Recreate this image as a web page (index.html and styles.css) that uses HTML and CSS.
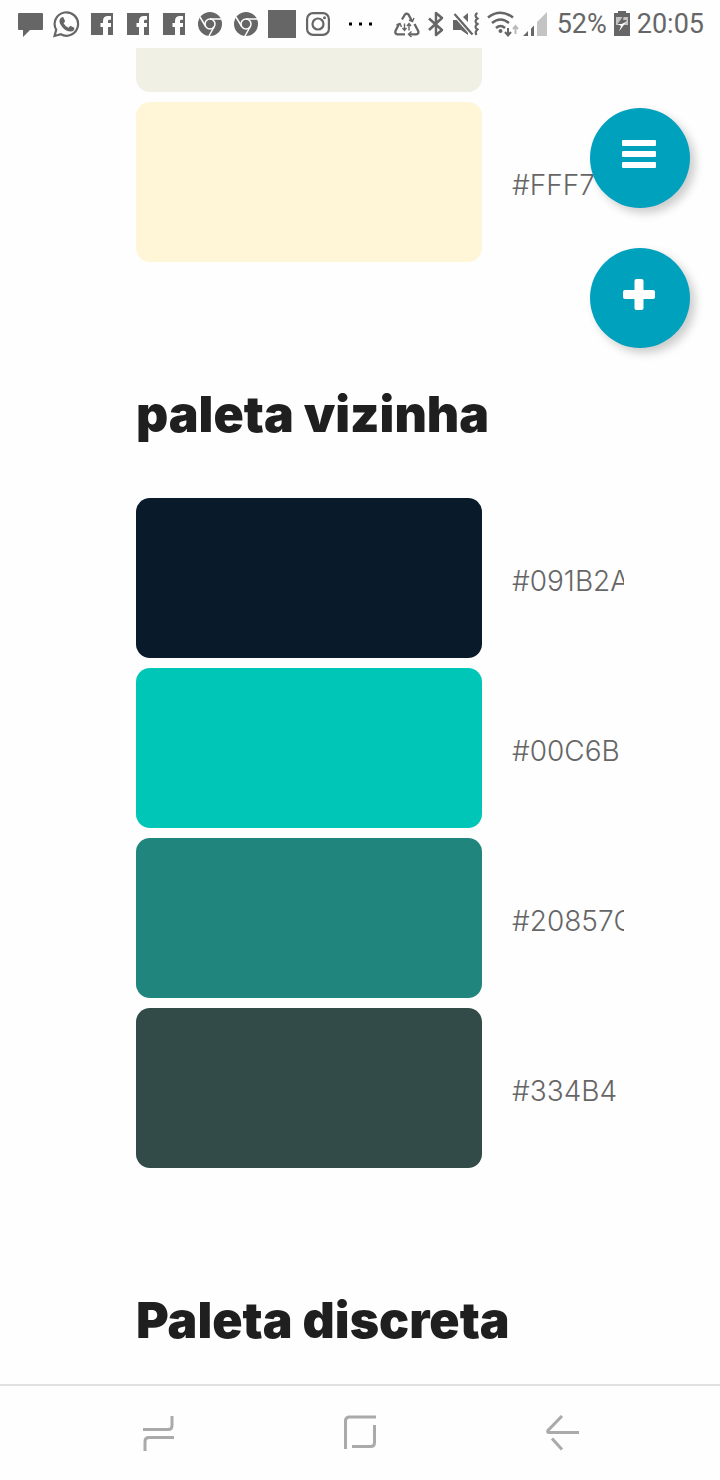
FILE: index.html
```html
<!DOCTYPE html>
<html lang="pt-BR">
<head>
<meta charset="utf-8">
<meta name="viewport" content="width=device-width, initial-scale=1">
<title>Paletas</title>
<link rel="stylesheet" href="styles.css">
</head>
<body>
<svg class="symbols" aria-hidden="true">
  <symbol id="facebook" viewBox="0 0 28 28"><path fill="#666" d="M3 3h22v22h-5v-8h3v-4h-3v-2q0-1.300 1.300-1.300H23V6h-3q-5 0-5 5v2h-2.500v4H15v8H3z"/></symbol>
  <symbol id="chrome" viewBox="0 0 28 28"><circle cx="14" cy="14" r="12" fill="#666"/><g fill="none" stroke="#fff" stroke-width="1.500"><circle cx="14" cy="14" r="5"/><path d="M14 9h11M9.700 16.500 4 7M18.300 16.500 13 26"/></g></symbol>
</svg>
<header class="status">
  <div class="notices">
    <svg class="icon" viewBox="0 0 28 28"><path fill="#666" d="M3 3h23q1 0 1 1v15q0 1-1 1H14l-7 7v-7H3q-1 0-1-1V4q0-1 1-1z"/></svg>
    <svg class="icon" viewBox="0 0 28 28"><path d="m2.500 26 1.700-6.200a11.700 11.700 0 1 1 4.600 4.500z" fill="none" stroke="#666" stroke-width="2.200"/><path fill="#666" d="M9.500 7.500q1-.8 2 0l1.500 3.500q.2.700-1.400 2.200 1.700 3.300 4.900 4.600l1.800-2.100 4 2q.5 3.500-3.700 3.900-4.600-.3-8-4.200-3.800-4.200-3-7.300.5-1.900 1.900-2.600z"/></svg>
    <svg class="icon"><use href="#facebook"/></svg>
    <svg class="icon"><use href="#facebook"/></svg>
    <svg class="icon"><use href="#facebook"/></svg>
    <svg class="icon"><use href="#chrome"/></svg>
    <svg class="icon"><use href="#chrome"/></svg>
    <span class="block"></span>
    <svg class="icon" viewBox="0 0 28 28"><g fill="none" stroke="#666" stroke-width="2.200"><rect x="3.100" y="3.100" width="21.800" height="21.800" rx="6"/><circle cx="14" cy="14" r="5.500"/></g><circle cx="20.500" cy="7.700" r="1.500" fill="#666"/></svg>
    <svg class="icon dots" viewBox="0 0 28 28"><path d="M1 12.500h3v3H1zM11 12.500h3v3h-3zM21 12.500h3v3h-3z"/></svg>
  </div>
  <div class="system">
    <svg width="26" height="28" viewBox="0 0 26 28"><g fill="none" stroke="#666" stroke-width="2.300"><path d="m8 9.500 3-5q1.700-1.800 3.400 0l3.600 6.500M5 14l-3.500 7q-.8 3 2 3.300H11M20.500 14l3.700 7q.8 3-2 3.300H15"/></g><path d="m15 10 3.500 1.500L20 8M2.500 15l3.500-1.500L7.500 17M17.500 21.500 14.500 24.300l3 2.700" fill="none" stroke="#666" stroke-width="1.400"/><path d="M10.500 13.500v7M15 20.500v-7M8.500 18l2 2.500 2-2.500M13 16l2-2.500 2 2.500" fill="none" stroke="#666" stroke-width="1.400"/></svg>
    <svg width="18" height="28" viewBox="0 0 18 28"><path d="m2 8.500 13 11.500-6 5V3l6 5L2 20" fill="none" stroke="#666" stroke-width="2.500" stroke-linejoin="round"/></svg>
    <svg class="mute" width="28" height="28" viewBox="0 0 28 28"><path fill="#666" d="M1 10h7l8 8.500V25l-7-5H1zM11 7l5-4v9z"/><path d="m2.500 4 18 20.500" stroke="#fff" stroke-width="4.500"/><path d="m2.500 4 18 20.500" stroke="#666" stroke-width="2.300"/><path d="M25.500 3q-4 2 0 5.500-4 2.500 0 5.500-4 2.500 0 5.500-3 2.500-1 5.500" fill="none" stroke="#666" stroke-width="2.200"/></svg>
    <svg class="wifi" width="32" height="28" viewBox="0 0 32 28"><g fill="none" stroke="#666" stroke-width="2.500"><path d="M1 7.500q12.500-9.500 25 0M5 13q8.500-7 17 0M9 18q4.500-4 9 0"/></g><circle cx="13.500" cy="21" r="2" fill="#666"/><path d="M21 18v7.500M18 22l3 3.500 3-3.500" fill="none" stroke="#666" stroke-width="2"/><path d="M28.500 24v-8M26 19l2.500-3 2.500 3" fill="none" stroke="#bbb" stroke-width="2"/></svg>
    <svg width="26" height="28" viewBox="0 0 26 28"><path fill="#666" d="M1 26l5-5v5zM9 26v-7.500l3-3V26z"/><path fill="#c4c4c4" d="M15 26V12l10-10v24z"/></svg>
    <span class="percent">52%</span>
    <svg class="battery" width="16" height="28" viewBox="0 0 16 28"><path fill="#666" d="M4 1h8v2h4v23H0V3h4z"/><path fill="#c4c4c4" d="M2 7h12v8H2z"/><path fill="#666" d="M10 5 3.500 14H8l-1 3 6-7H9z"/><path fill="#fff" d="M4 14h3.500L12 12 5 21.500 7 16z"/></svg>
    <time>20:05</time>
  </div>
</header>

<main class="page">
  <div class="content">
    <ul class="palette scrolled">
      <li class="row"><span class="swatch sand"></span></li>
      <li class="row"><span class="swatch cream"></span><span class="code">#FFF7</span></li>
    </ul>
    <h2 class="title">paleta vizinha</h2>
    <ul class="palette">
      <li class="row"><span class="swatch navy"></span><span class="code">#091B2A</span></li>
      <li class="row"><span class="swatch turquoise"></span><span class="code">#00C6B</span></li>
      <li class="row"><span class="swatch teal"></span><span class="code">#20857C</span></li>
      <li class="row"><span class="swatch slate"></span><span class="code">#334B4</span></li>
    </ul>
    <h2 class="title">Paleta discreta</h2>
  </div>
  <div class="actions">
    <button class="fab" type="button" aria-label="Menu"><svg width="34" height="28" viewBox="0 0 34 28" fill="#fff"><rect width="34" height="6" rx="1"/><rect y="11" width="34" height="6" rx="1"/><rect y="22" width="34" height="6" rx="1"/></svg></button>
    <button class="fab" type="button" aria-label="Adicionar"><svg width="34" height="32" viewBox="0 0 34 32" fill="#fff"><rect x="1" y="12" width="32" height="9" rx="2"/><rect x="12.500" y="1" width="9" height="31" rx="2"/></svg></button>
  </div>
</main>

<nav class="navbar" aria-label="Sistema">
  <button class="key" type="button" aria-label="Recentes"><svg width="36" height="36" viewBox="0 0 36 36"><path d="M2 14.500h25q4 0 4-4V1M33 22.500H8q-4 0-4 4V36" /></svg></button>
  <button class="key" type="button" aria-label="Início"><svg width="36" height="36" viewBox="0 0 36 36"><path d="M3.500 34V6q0-4 4-4H34M32.500 10v17.500q0 4-4 4H10"/></svg></button>
  <button class="key" type="button" aria-label="Voltar"><svg width="36" height="36" viewBox="0 0 36 36"><path d="M19 1 5 15.500q-1 2 1 2h30M9 23.500l10 11"/></svg></button>
</nav>
</body>
</html>
```
FILE: styles.css
```css
* { box-sizing: border-box; }

body {
  margin: 0;
  height: 100vh;
  display: flex;
  flex-direction: column;
  background: #fefefe;
  font-family: Inter, "Open Sans", sans-serif;
}

button {
  border: 0;
  padding: 0;
  background: none;
  cursor: pointer;
}

svg { display: block; flex: none; }

.symbols { position: absolute; width: 0; height: 0; }

.status {
  flex: none;
  height: 48px;
  padding: 0 16px;
  display: flex;
  align-items: center;
  justify-content: space-between;
  color: #666;
  font: 27px/48px Roboto, sans-serif;
}

.notices, .system { display: flex; align-items: center; }
.notices { gap: 8px; }
.system { gap: 7px; }
.icon, .block { width: 28px; height: 28px; }
.block { background: #666; }
.dots { margin-left: 8px; }
.percent { margin-left: 2px; }
.wifi { margin-right: -4px; }

.page {
  position: relative;
  flex: 1;
  min-height: 0;
  overflow: hidden;
}

.content {
  margin-right: 96px;
  padding-left: 136px;
  overflow: hidden;
}

.palette {
  margin: 0;
  padding: 0;
  list-style: none;
  display: grid;
  gap: 10px;
}

/* The first palette is partly scrolled past the top edge. */
.scrolled { margin-top: -116px; }

.row {
  display: grid;
  grid-template-columns: minmax(0, 346px) minmax(112px, 1fr);
  gap: 30px;
  align-items: center;
}

.swatch { height: 160px; border-radius: 14px; }
.sand { background: #f0f0e4; }
.cream { background: #fff6d7; }
.navy { background: #091b2a; }
.turquoise { background: #00c6b7; }
.teal { background: #20857c; }
.slate { background: #334b48; }

.code {
  padding-top: 6px;
  overflow: hidden;
  white-space: nowrap;
  color: #666;
  font-size: 28px;
  font-weight: 300;
  line-height: 32px;
}

.title {
  margin: 124px 0 56px;
  color: #1f1f1f;
  font-size: 50px;
  font-weight: 900;
  line-height: 56px;
  white-space: nowrap;
}

.actions {
  position: absolute;
  top: 60px;
  right: 30px;
  display: grid;
  gap: 40px;
}

.fab {
  width: 100px;
  height: 100px;
  padding: 0 2px 8px 0;
  display: grid;
  place-items: center;
  border-radius: 50%;
  background: #00a1bd;
  box-shadow: 5px 5px 10px rgba(0, 0, 0, 0.2);
}

.navbar {
  flex: none;
  height: 96px;
  padding: 0 58px;
  display: grid;
  grid-template-columns: repeat(3, 1fr);
  border-top: 2px solid #e1e1e1;
}

.key { display: grid; place-items: center; }
.key path { fill: none; stroke: #aaa; stroke-width: 3; }
```
